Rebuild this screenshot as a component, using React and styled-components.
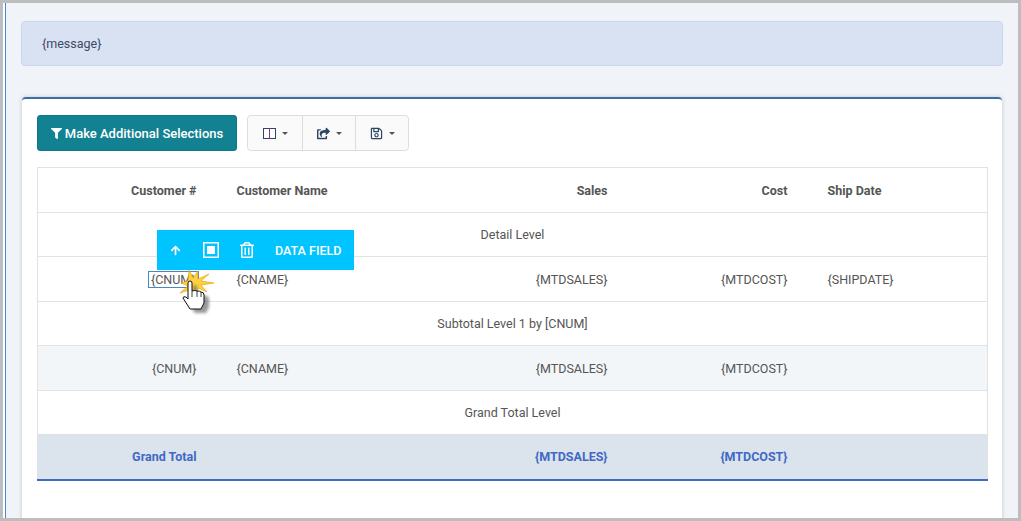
import React from 'react';
import styled, { createGlobalStyle } from 'styled-components';
import { FaFilter, FaArrowUp, FaRegTrashAlt, FaRegSave, FaShareSquare, FaRegStopCircle } from 'react-icons/fa';

const Global = createGlobalStyle`
  html, body { margin: 0; padding: 0; background: #fff; }
  * { box-sizing: border-box; }
`;
const Frame = styled.div`
  width: 1021px; height: 521px; overflow: hidden;
  border: solid #bdbdbd; border-width: 3px 3px 3px 3px;
  background: #fff; padding-left: 2px;
  font-family: Roboto, "Liberation Sans", sans-serif;
  font-size: 12.5px; color: #555;
`;
const Page = styled.div`
  height: 100%; background: #f0f3f7; border-left: 1px solid #4a86c8;
  padding: 18px 15px 0 15px; overflow: hidden;
`;
const Alert = styled.div`
  height: 45px; background: #d9e2f2; border: 1px solid #c9d6ec; border-radius: 4px;
  padding: 0 20px; display: flex; align-items: center; color: #3d4a66;
  font-size: 12.5px; margin-bottom: 31px;
`;
const Panel = styled.div`
  background: #fff; border-top: 2px solid #3a6ea5; border-radius: 4px 4px 0 0;
  box-shadow: 0 0 4px rgba(0,0,0,.18); margin: 0 1px; height: 460px; padding: 16px 15px 0;
`;
const Toolbar = styled.div`
  display: flex; gap: 10px; margin-bottom: 16px;
`;
const Primary = styled.button`
  height: 36px; width: 200px; background: #128292; border: 1px solid #0f7685; border-radius: 3px;
  color: #fff; font: 500 13px Roboto, sans-serif; display: flex; align-items: center;
  justify-content: center; gap: 3px; padding: 0;
`;
const Group = styled.div`
  display: flex; height: 36px; border: 1px solid #ddd; border-radius: 4px; background: #fafafa;
`;
const GroupBtn = styled.div`
  width: ${p => p.$w}px; display: flex; align-items: center; justify-content: center; gap: 6px;
  color: #2c4664; & + & { border-left: 1px solid #ddd; }
`;
const Caret = styled.span`
  width: 0; height: 0; border: 3px solid transparent; border-top: 3px solid #555; border-bottom: 0;
`;
const Table = styled.table`
  width: 950px; border-collapse: collapse; table-layout: fixed; border: 1px solid #e2e2e2;
  border-bottom: 2px solid #3e6cc0;
`;
const Row = styled.tr`
  height: ${p => p.$h}px; background: ${p => p.$bg || '#fff'};
  border-bottom: 1px solid #e2e2e2;
  position: relative;
  color: ${p => p.$blue ? '#4169c4' : '#555'};
  font-weight: ${p => p.$bold ? 700 : 400};
`;
const Cell = styled.td`
  padding: 0 20px; text-align: ${p => p.$r ? 'right' : p.$c ? 'center' : 'left'}; position: relative;
`;
const Selected = styled.span`
  outline: 1px solid #4a86c8; padding: 0 2px; margin-right: -1px;
`;
const Float = styled.div`
  position: absolute; left: 157px; top: 230px; width: 197px; height: 40px; background: #00c4ff;
  color: #fff; display: flex; align-items: center; padding-left: 13px; font-size: 12.5px; font-weight: 500;
`;
const FloatIcon = styled.span`
  width: ${p => p.$w}px; display: flex; align-items: center; justify-content: flex-start;
`;
const CursorWrap = styled.svg`
  position: absolute; left: 176px; top: 268px; width: 44px; height: 50px;
`;

const ColBox = () => (
  <svg width="13" height="11" viewBox="0 0 13 11">
    <rect x=".5" y=".5" width="12" height="10" fill="#fff" stroke="#2c4664" />
    <line x1="6.5" y1="0" x2="6.5" y2="11" stroke="#7a3f8f" />
  </svg>
);
const SquareBox = () => (
  <svg width="16" height="16" viewBox="0 0 16 16">
    <rect x=".75" y=".75" width="14.5" height="14.5" fill="none" stroke="#fff" strokeWidth="1.5" />
    <rect x="4" y="4" width="8" height="8" fill="#fff" />
  </svg>
);

export default function App() {
  return (
    <Frame>
      <Global />
      <Page>
        <Alert>{'{message}'}</Alert>
        <Panel>
          <Toolbar>
            <Primary><FaFilter size={11} /> Make Additional Selections</Primary>
            <Group>
              <GroupBtn $w={54}><ColBox /><Caret /></GroupBtn>
              <GroupBtn $w={53}><FaShareSquare size={13} /><Caret /></GroupBtn>
              <GroupBtn $w={53}><FaRegSave size={13} /><Caret /></GroupBtn>
            </Group>
          </Toolbar>
          <Table>
            <colgroup>
              <col style={{ width: 179 }} /><col style={{ width: 200 }} /><col style={{ width: 211 }} /><col style={{ width: 180 }} /><col style={{ width: 180 }} />
            </colgroup>
            <tbody>
              <Row $h={45} $bold>
                <Cell $r>Customer #</Cell><Cell>Customer Name</Cell><Cell $r>Sales</Cell><Cell $r>Cost</Cell><Cell>Ship Date</Cell>
              </Row>
              <Row $h={44}><Cell $c colSpan={5}>Detail Level</Cell></Row>
              <Row $h={45}>
                <Cell $r><Selected>{'{CNUM}'}</Selected></Cell><Cell>{'{CNAME}'}</Cell><Cell $r>{'{MTDSALES}'}</Cell><Cell $r>{'{MTDCOST}'}</Cell><Cell>{'{SHIPDATE}'}</Cell>
              </Row>
              <Row $h={44}><Cell $c colSpan={5}>Subtotal Level 1 by [CNUM]</Cell></Row>
              <Row $h={45} $bg="#f3f6f9">
                <Cell $r>{'{CNUM}'}</Cell><Cell>{'{CNAME}'}</Cell><Cell $r>{'{MTDSALES}'}</Cell><Cell $r>{'{MTDCOST}'}</Cell><Cell />
              </Row>
              <Row $h={44}><Cell $c colSpan={5}>Grand Total Level</Cell></Row>
              <Row $h={45} $bg="#dbe3ed" $blue $bold>
                <Cell $r>Grand Total</Cell><Cell /><Cell $r>{'{MTDSALES}'}</Cell><Cell $r>{'{MTDCOST}'}</Cell><Cell />
              </Row>
            </tbody>
          </Table>
        </Panel>
      </Page>
      <Float>
        <FloatIcon $w={33}><FaArrowUp size={11} /></FloatIcon>
        <FloatIcon $w={36}><SquareBox /></FloatIcon>
        <FloatIcon $w={36}><FaRegTrashAlt size={16} /></FloatIcon>
        <span>DATA FIELD</span>
      </Float>
      <CursorWrap viewBox="0 0 44 50">
        <defs><filter id="s" x="-30%" y="-30%" width="170%" height="170%"><feGaussianBlur stdDeviation="1.5" /></filter></defs>
        <path d="M13 2 L17 10 L22 3 L22 11 L33 6 L25 13 L38 15 L25 17 L31 24 L22 20 L20 28 L16 21 L4 25 L12 18 L5 15 L12 13 Z" fill="#ffd040" stroke="#e0a000" strokeWidth=".6" />
        <path d="M15 17 q0-2 2-2 q2 0 2 2 v8 q3-1 5 0 q3 0 4 1 q3 0 3 3 v8 l-3 6 h-11 l-7-11 q0-2 3-1 l2 2 Z" transform="translate(2 2)" fill="#555" opacity=".6" filter="url(#s)" />
        <path d="M12 15 q0-2 2-2 q2 0 2 2 v8 q3-1 5 0 q3 0 4 1 q3 0 3 3 v8 l-3 6 h-11 l-7-11 q0-2 3-1 l2 2 Z" fill="#fff" stroke="#111" strokeWidth="1" />
        <path d="M16 23 v6 M21 23 v6 M25 24 v5" stroke="#111" strokeWidth=".8" fill="none" />
      </CursorWrap>
    </Frame>
  );
}
